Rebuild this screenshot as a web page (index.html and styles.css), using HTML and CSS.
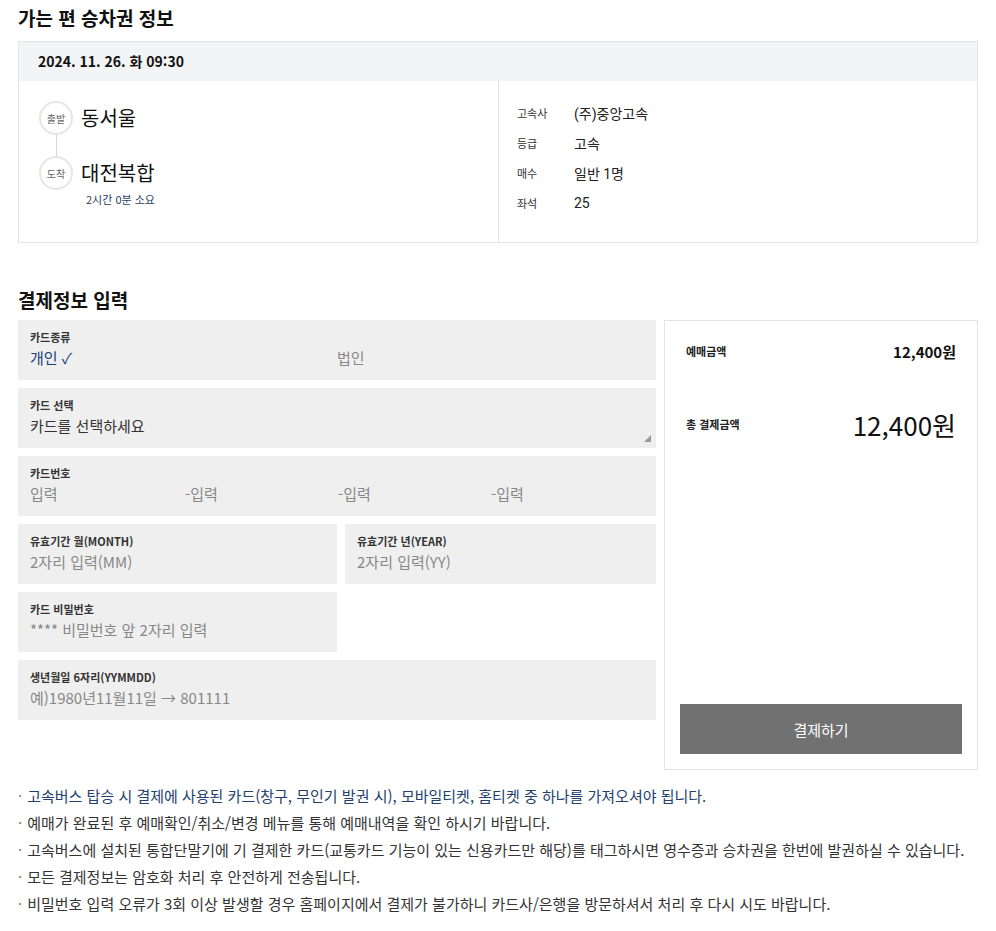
FILE: index.html
```html
<!DOCTYPE html>
<html lang="ko">
<head>
<meta charset="utf-8">
<link rel="stylesheet" href="styles.css">
</head>
<body>
<div class="page">
  <h2 class="sec-title">가는 편 승차권 정보</h2>
  <div class="ticket">
    <div class="ticket-head">2024. 11. 26. 화 09:30</div>
    <div class="ticket-body">
      <div class="route">
        <div class="stop">
          <span class="badge">출발</span>
          <span class="station">동서울</span>
        </div>
        <div class="stop arrive">
          <span class="badge">도착</span>
          <span class="station">대전복합</span>
        </div>
        <div class="duration">2시간 0분 소요</div>
      </div>
      <div class="info">
        <div class="info-row"><span class="info-label">고속사</span><span class="info-val">(주)중앙고속</span></div>
        <div class="info-row"><span class="info-label">등급</span><span class="info-val">고속</span></div>
        <div class="info-row"><span class="info-label">매수</span><span class="info-val">일반 1명</span></div>
        <div class="info-row"><span class="info-label">좌석</span><span class="info-val">25</span></div>
      </div>
    </div>
  </div>

  <h2 class="sec-title pay-title">결제정보 입력</h2>
  <div class="pay">
    <div class="form">
      <div class="field">
        <div class="f-label">카드종류</div>
        <div class="f-cols">
          <span class="f-val selected">개인 ✓</span>
          <span class="f-val ph">법인</span>
        </div>
      </div>
      <div class="field select">
        <div class="f-label">카드 선택</div>
        <div class="f-val dark">카드를 선택하세요</div>
        <span class="resize"></span>
      </div>
      <div class="field">
        <div class="f-label">카드번호</div>
        <div class="f-cards">
          <span class="f-val ph">입력</span>
          <span class="f-val ph">-입력</span>
          <span class="f-val ph">-입력</span>
          <span class="f-val ph">-입력</span>
        </div>
      </div>
      <div class="f-row">
        <div class="field">
          <div class="f-label">유효기간 월(MONTH)</div>
          <div class="f-val ph">2자리 입력(MM)</div>
        </div>
        <div class="field">
          <div class="f-label">유효기간 년(YEAR)</div>
          <div class="f-val ph">2자리 입력(YY)</div>
        </div>
      </div>
      <div class="f-row">
        <div class="field">
          <div class="f-label">카드 비밀번호</div>
          <div class="f-val ph">**** 비밀번호 앞 2자리 입력</div>
        </div>
        <div></div>
      </div>
      <div class="field">
        <div class="f-label">생년월일 6자리(YYMMDD)</div>
        <div class="f-val ph">예)1980년11월11일 → 801111</div>
      </div>
    </div>
    <div class="summary">
      <div class="sum-row">
        <span class="sum-label">예매금액</span>
        <span class="sum-amt">12,400원</span>
      </div>
      <div class="sum-row total">
        <span class="sum-label">총 결제금액</span>
        <span class="sum-total">12,400원</span>
      </div>
      <button class="pay-btn">결제하기</button>
    </div>
  </div>

  <ul class="notes">
    <li class="hl">고속버스 탑승 시 결제에 사용된 카드(창구, 무인기 발권 시), 모바일티켓, 홈티켓 중 하나를 가져오셔야 됩니다.</li>
    <li>예매가 완료된 후 예매확인/취소/변경 메뉴를 통해 예매내역을 확인 하시기 바랍니다.</li>
    <li>고속버스에 설치된 통합단말기에 기 결제한 카드(교통카드 기능이 있는 신용카드만 해당)를 태그하시면 영수증과 승차권을 한번에 발권하실 수 있습니다.</li>
    <li>모든 결제정보는 암호화 처리 후 안전하게 전송됩니다.</li>
    <li>비밀번호 입력 오류가 3회 이상 발생할 경우 홈페이지에서 결제가 불가하니 카드사/은행을 방문하셔서 처리 후 다시 시도 바랍니다.</li>
  </ul>
</div>
</body>
</html>
```

FILE: styles.css
```css
* { box-sizing: border-box; }
html, body { margin: 0; padding: 0; background: #fff; }
body {
  font-family: "Noto Sans CJK KR", "Noto Sans", sans-serif;
  color: #222;
}
.page { padding: 4px 18px 0 18px; width: 996px; }

.sec-title {
  margin: 0;
  font-size: 19px;
  font-weight: 700;
  line-height: 28px;
  color: #111;
  height: 37px;
}
.pay-title { margin-top: 45px; height: 32px; line-height: 24px; }

.ticket { border: 1px solid #e3e3e3; width: 960px; }
.ticket-head {
  background: #f3f4f5;
  height: 39px;
  line-height: 38px;
  padding-left: 19px;
  font-size: 14px;
  font-weight: 700;
  color: #111;
}
.ticket-body { display: flex; height: 161px; }
.route {
  width: 480px;
  border-right: 1px solid #e3e3e3;
  padding: 20px 0 0 20px;
  position: relative;
}
.stop { display: flex; align-items: center; height: 34px; position: relative; }
.stop.arrive { margin-top: 21px; }
.stop.arrive::before {
  content: "";
  position: absolute;
  left: 17px;
  top: -22px;
  height: 22px;
  width: 1px;
  background: #d8d8d8;
}
.badge {
  width: 34px; height: 34px;
  border: 2px solid #e6e6e6;
  border-radius: 50%;
  display: flex; align-items: center; justify-content: center;
  font-size: 10px;
  color: #666;
  background: #fff;
}
.station { font-size: 20px; margin-left: 8px; color: #111; line-height: 28px; }
.duration { font-size: 11px; color: #2b4166; margin: 1px 0 0 47px; line-height: 16px; }

.info { padding: 17px 0 0 18px; }
.info-row { display: flex; align-items: center; height: 30px; }
.info-label { width: 57px; font-size: 11px; color: #333; }
.info-val { font-size: 14px; color: #222; font-family: Roboto, "Noto Sans CJK KR", sans-serif; }

.pay { display: flex; gap: 8px; align-items: flex-start; }
.form { width: 638px; display: flex; flex-direction: column; gap: 8px; }
.f-row { display: grid; grid-template-columns: 319px 311px; gap: 8px; }
.field {
  background: #efefef;
  height: 60px;
  padding: 9px 12px 0 12px;
  position: relative;
}
.f-label { font-size: 11px; font-weight: 700; color: #333; line-height: 16px; }
.f-val { font-size: 15px; color: #888; line-height: 24px; margin-top: 1px; }
.f-val.dark { color: #333; }
.f-val.selected { color: #1c3d78; }
.f-cols { display: grid; grid-template-columns: 307px 1fr; }
.f-cards { display: grid; grid-template-columns: 155px 153px 153px 1fr; }
.resize {
  position: absolute; right: 5px; bottom: 6px;
  width: 0; height: 0;
  border-left: 7px solid transparent;
  border-bottom: 7px solid #999;
}

.summary {
  width: 314px;
  height: 450px;
  border: 1px solid #e3e3e3;
  padding: 18px 15px 0 15px;
  display: flex;
  flex-direction: column;
}
.sum-row { display: flex; justify-content: space-between; align-items: center; padding: 0 6px; height: 24px; }
.sum-row.total { margin-top: 43px; height: 36px; }
.sum-label { font-size: 11px; font-weight: 700; color: #222; }
.sum-amt { font-size: 15px; font-weight: 700; color: #111; }
.sum-total { font-size: 26px; color: #111; font-weight: 400; }
.pay-btn {
  margin-top: auto;
  margin-bottom: 15px;
  height: 50px;
  width: 282px;
  border: 0;
  background: #717171;
  color: #fff;
  font-family: inherit;
  font-size: 15px;
}

.notes { list-style: none; margin: 12px 0 0 0; padding: 0; }
.notes li { font-size: 15px; line-height: 27px; color: #333; }
.notes li::before { content: "·"; margin-right: 5px; color: #777; }
.notes li.hl { color: #23406e; }
```
